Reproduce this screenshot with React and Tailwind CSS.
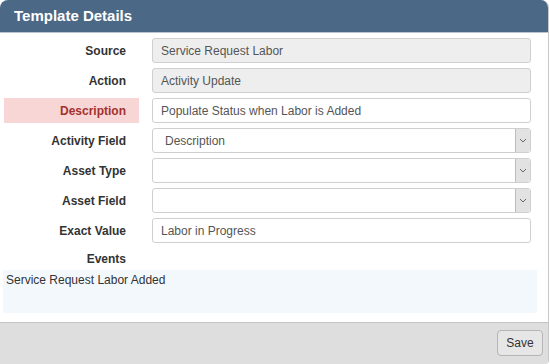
import React from "react";

const font = { fontFamily: '"Liberation Sans", Arial, sans-serif' };

function Label({ children, error }) {
  return (
    <div
      className={`ml-[4px] flex h-full w-[135px] items-center justify-end pr-[13px] text-[12px] font-bold ${
        error ? "bg-[#f9d6d6] text-[#a3312f]" : "text-[#333]"
      }`}
    >
      {children}
    </div>
  );
}

function TextBox({ value, disabled }) {
  return (
    <div
      className={`ml-[13px] flex h-full w-[379px] items-center rounded-[3px] border border-[#cfcfcf] px-[8px] text-[12px] text-[#555] ${
        disabled ? "bg-[#eeeeee]" : "bg-white"
      }`}
    >
      {value}
    </div>
  );
}

function SelectBox({ value }) {
  return (
    <div className="ml-[13px] flex h-full w-[379px] items-stretch rounded-[3px] border border-[#cfcfcf] bg-white text-[12px] text-[#555]">
      <div className="flex flex-1 items-center pl-[12px]">{value}</div>
      <div className="flex w-[15px] items-center justify-center rounded-r-[3px] border-l border-[#bdbdbd] bg-[#e2e2e2]">
        <svg width="8" height="5" viewBox="0 0 8 5">
          <polyline points="1,1 4,4 7,1" fill="none" stroke="#666" strokeWidth="1" />
        </svg>
      </div>
    </div>
  );
}

function Row({ label, error, children }) {
  return (
    <div className="flex h-[25px] items-center">
      <Label error={error}>{label}</Label>
      {children}
    </div>
  );
}

export default function App() {
  return (
    <div className="h-[364px] w-[550px] overflow-hidden bg-white" style={font}>
      <div className="flex h-[364px] w-[549px] flex-col overflow-hidden rounded-t-[8px] rounded-br-[4px] border-r border-[#c8c8c8]">
        <div className="flex h-[33px] shrink-0 items-center border-b border-[#b9c6d2] bg-[#4b6886] pl-[14px] text-[15px] font-bold text-white">
          Template Details
        </div>

        <div className="flex flex-col gap-[5px] pt-[5px]">
          <Row label="Source">
            <TextBox value="Service Request Labor" disabled />
          </Row>
          <Row label="Action">
            <TextBox value="Activity Update" disabled />
          </Row>
          <Row label="Description" error>
            <TextBox value="Populate Status when Labor is Added" />
          </Row>
          <Row label="Activity Field">
            <SelectBox value="Description" />
          </Row>
          <Row label="Asset Type">
            <SelectBox value="" />
          </Row>
          <Row label="Asset Field">
            <SelectBox value="" />
          </Row>
          <Row label="Exact Value">
            <TextBox value="Labor in Progress" />
          </Row>
          <div className="flex h-[22px] items-center">
            <Label>Events</Label>
          </div>
        </div>

        <div className="ml-[3px] h-[43px] w-[534px] bg-[#f3f8fc] px-[3px] pt-[1px] text-[12px] text-[#333]">
          Service Request Labor Added
        </div>

        <div className="mt-[9px] flex flex-1 items-start justify-end border-t border-[#c4c4c4] bg-[#dedede] pr-[5px] pt-[7px]">
          <button className="h-[26px] w-[46px] rounded-[4px] border border-[#b5b5b5] bg-[#e6e6e6] text-[12px] text-[#333]">
            Save
          </button>
        </div>
      </div>
    </div>
  );
}
